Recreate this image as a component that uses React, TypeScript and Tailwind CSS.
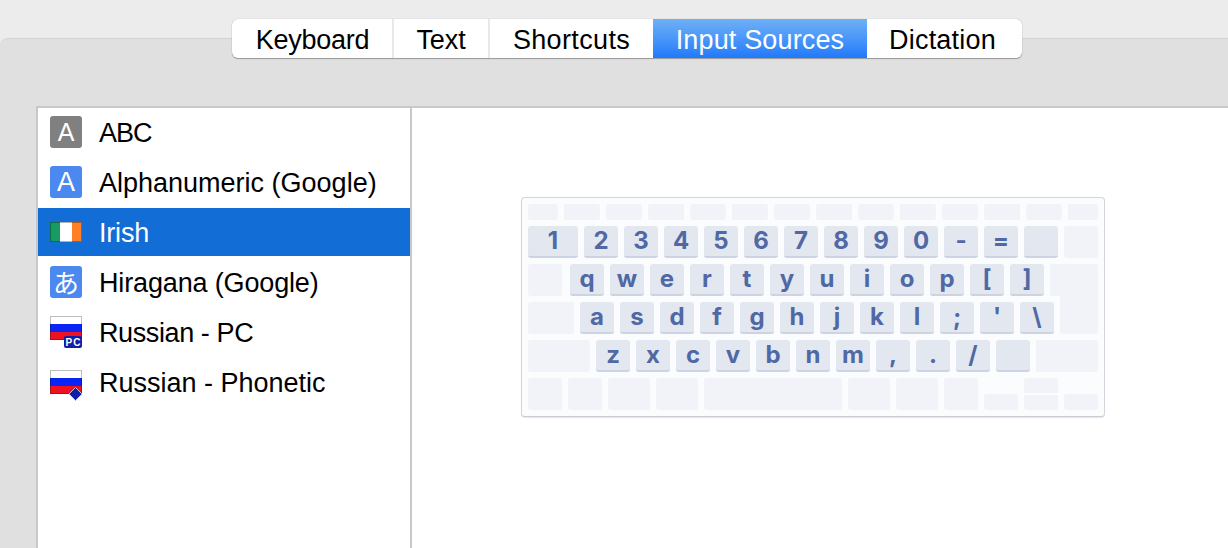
import React from 'react'

const tabs = [
  { label: 'Keyboard', width: 'w-[162px]', text: 'tracking-[-0.25px] pl-[1px]' },
  { label: 'Text', width: 'w-[96px]', text: 'tracking-[-0.1px]' },
  { label: 'Shortcuts', width: 'w-[163px]', text: 'tracking-[0.35px]' },
  { label: 'Input Sources', width: 'w-[214px]', text: 'tracking-[0.15px]', active: true },
  { label: 'Dictation', width: 'w-[155px]', text: 'tracking-[0.2px] pr-[4px]' },
]

type KeySpec = { w: number; label?: string; light?: boolean }

const k = (label: string): KeySpec => ({ w: 34, label })
const blank = (w: number): KeySpec => ({ w, light: true })

const fnRow = [30, 36, 36, 36, 36, 36, 36, 36, 36, 36, 36, 36, 36, 30]

const row1: KeySpec[] = [
  { w: 50, label: '1' },
  ...'234567890-='.split('').map(k),
  { w: 34 },
  blank(34),
]
const row2: KeySpec[] = [blank(34), ...'qwertyuiop[]'.split('').map(k)]
const row3: KeySpec[] = [blank(46), ...`asdfghjkl;'\\`.split('').map(k)]
const row4: KeySpec[] = [
  blank(62),
  ...'zxcvbnm,./'.split('').map(k),
  { w: 34 },
  blank(62),
]
const row5 = [34, 34, 42, 42, 138, 42, 42, 34]

const Key = ({ w, label, light }: KeySpec) => (
  <div
    style={{ width: w }}
    className={`h-8 shrink-0 rounded-[3px] flex items-center justify-center font-['Inter',sans-serif] font-bold text-[24px] leading-none text-[#5068a3] ${
      light ? 'bg-[#f1f3f8]' : 'bg-[#e3e7f0] border-b-2 border-[#ccd3e3]'
    }`}
  >
    {label}
  </div>
)

const Keyboard = () => (
  <div className="w-[584px] h-[220px] bg-[#fbfcfe] border border-[#d3d6dd] border-b-[#c9ccd3] rounded-[4px] shadow-[0_1px_1px_rgba(0,0,0,0.1)] pt-[6px] pl-[6px] flex flex-col gap-[6px]">
    <div className="flex gap-[6px]">
      {fnRow.map((w, i) => (
        <div key={i} style={{ width: w }} className="h-4 rounded-[3px] bg-[#f1f3f8]" />
      ))}
    </div>
    <div className="flex gap-[6px]">
      {row1.map((key, i) => (
        <Key key={i} {...key} />
      ))}
    </div>
    <div className="flex gap-[6px]">
      {row2.map((key, i) => (
        <div key={i} className={i === 0 ? 'mr-[2px]' : ''}>
          <Key {...key} />
        </div>
      ))}
      {/* Return key, upper part of the L shape */}
      <div className="relative w-[48px] h-8 bg-[#f1f3f8] rounded-t-[3px]">
        <div className="absolute left-[10px] right-0 top-8 h-[6px] bg-[#f1f3f8]" />
      </div>
    </div>
    <div className="flex gap-[6px]">
      {row3.map((key, i) => (
        <Key key={i} {...key} />
      ))}
      <div className="w-[38px] h-8 bg-[#f1f3f8] rounded-b-[3px]" />
    </div>
    <div className="flex gap-[6px]">
      {row4.map((key, i) => (
        <Key key={i} {...key} />
      ))}
    </div>
    <div className="flex gap-[6px]">
      {row5.map((w, i) => (
        <div key={i} style={{ width: w }} className="h-8 rounded-[3px] bg-[#f1f3f8]" />
      ))}
      <div className="w-[34px] h-8 flex items-end">
        <div className="w-full h-4 rounded-[3px] bg-[#f1f3f8]" />
      </div>
      <div className="w-[34px] h-8 flex flex-col justify-between">
        <div className="h-[15px] rounded-t-[3px] bg-[#f1f3f8]" />
        <div className="h-[15px] rounded-b-[3px] bg-[#f1f3f8]" />
      </div>
      <div className="w-[34px] h-8 flex items-end">
        <div className="w-full h-4 rounded-[3px] bg-[#f1f3f8]" />
      </div>
    </div>
  </div>
)

const LetterIcon = ({ bg, children, font }: { bg: string; children: React.ReactNode; font: string }) => (
  <div className={`w-8 h-8 rounded-[3px] flex items-center justify-center text-white leading-none ${bg} ${font}`}>
    {children}
  </div>
)

const IrishFlag = () => (
  <svg width="32" height="20" viewBox="0 0 32 20">
    <rect width="10" height="20" fill="#169b62" />
    <rect x="10" width="12" height="20" fill="#ffffff" />
    <rect x="22" width="10" height="20" fill="#ff7f27" />
    <rect x="0.5" y="0.5" width="31" height="19" fill="none" stroke="#000" strokeOpacity="0.3" />
  </svg>
)

const RussianFlag = ({ badge }: { badge: 'pc' | 'diamond' }) => (
  <svg width="32" height="32" viewBox="0 0 32 32" className="overflow-visible">
    <rect x="0" y="0" width="32" height="8" fill="#ffffff" />
    <rect x="0" y="8" width="32" height="8" fill="#0a24f5" />
    <rect x="0" y="16" width="32" height="8" fill="#ee1122" />
    <rect x="0.5" y="0.5" width="31" height="23" fill="none" stroke="#000" strokeOpacity="0.25" />
    {badge === 'pc' ? (
      <g>
        <rect x="14" y="20" width="18" height="12" rx="2" fill="#0f1da8" />
        <text
          x="23.5"
          y="30"
          textAnchor="middle"
          fontSize="10"
          fontWeight="700"
          letterSpacing="1"
          fill="#ffffff"
          fontFamily="'Liberation Sans', sans-serif"
        >
          PC
        </text>
      </g>
    ) : (
      <path d="M25.5 17.5 L32 24 L25.5 30.5 L19 24 Z" fill="#0f1da8" stroke="#b9bddc" strokeWidth="1" />
    )}
  </svg>
)

const sources = [
  {
    label: 'ABC',
    text: 'tracking-[-1px]',
    icon: <LetterIcon bg="bg-[#808080]" font="font-['Liberation_Sans',sans-serif] text-[25px]">A</LetterIcon>,
  },
  {
    label: 'Alphanumeric (Google)',
    text: '',
    icon: <LetterIcon bg="bg-[#4b88f0]" font="font-['Liberation_Sans',sans-serif] text-[27px]">A</LetterIcon>,
  },
  {
    label: 'Irish',
    text: 'tracking-[-0.2px]',
    icon: <IrishFlag />,
    selected: true,
  },
  {
    label: 'Hiragana (Google)',
    text: 'tracking-[-0.15px]',
    icon: <LetterIcon bg="bg-[#4b88f0]" font="font-['Noto_Sans_CJK_JP',sans-serif] text-[26px]">あ</LetterIcon>,
  },
  {
    label: 'Russian - PC',
    text: 'tracking-[-0.4px]',
    icon: <div className="h-8"><RussianFlag badge="pc" /></div>,
  },
  {
    label: 'Russian - Phonetic',
    text: '',
    icon: <div className="h-8 pt-[4px]"><RussianFlag badge="diamond" /></div>,
  },
]

export default function App() {
  return (
    <div className="h-[548px] w-[1228px] overflow-hidden bg-[#ececec] pt-[19px] font-['Liberation_Sans',sans-serif]">
      {/* Tabs */}
      <div className="relative z-10 ml-[232px] w-[790px] h-[39px] flex rounded-[6px] bg-white overflow-hidden shadow-[0_1px_1px_rgba(0,0,0,0.3),0_0_1px_rgba(0,0,0,0.3)]">
        {tabs.map((tab, i) => (
          <div
            key={tab.label}
            className={`${tab.width} ${tab.text} flex items-center justify-center pt-[3px] text-[27px] leading-none ${
              tab.active
                ? 'bg-gradient-to-b from-[#6fb0f5] to-[#2079fb] text-white'
                : 'text-black'
            } ${i < 2 ? 'border-r-2 border-[#e8e8e8]' : ''}`}
          >
            {tab.label}
          </div>
        ))}
      </div>

      {/* Panel */}
      <div className="-mt-[20px] h-[520px] bg-[#e0e0e0] border-t border-[#d3d3d3] rounded-tl-[8px] pt-[67px] pl-[36px]">
        <div className="w-[1300px] h-[480px] bg-white border-2 border-[#c8c8c8] flex">
          <div className="w-[372px] shrink-0 flex flex-col gap-[2px]">
            {sources.map((s) => (
              <div
                key={s.label}
                className={`h-12 flex items-center pl-3 gap-[17px] text-[27px] leading-none ${
                  s.selected ? 'bg-[#126dd6] text-white' : 'text-black'
                }`}
              >
                <div className="w-8 flex items-center justify-center">{s.icon}</div>
                <span className={`pt-[3px] ${s.text}`}>{s.label}</span>
              </div>
            ))}
          </div>
          <div className="flex-1 border-l-2 border-[#c8c8c8] pl-[109px] pt-[89px]">
            <Keyboard />
          </div>
        </div>
      </div>
    </div>
  )
}
